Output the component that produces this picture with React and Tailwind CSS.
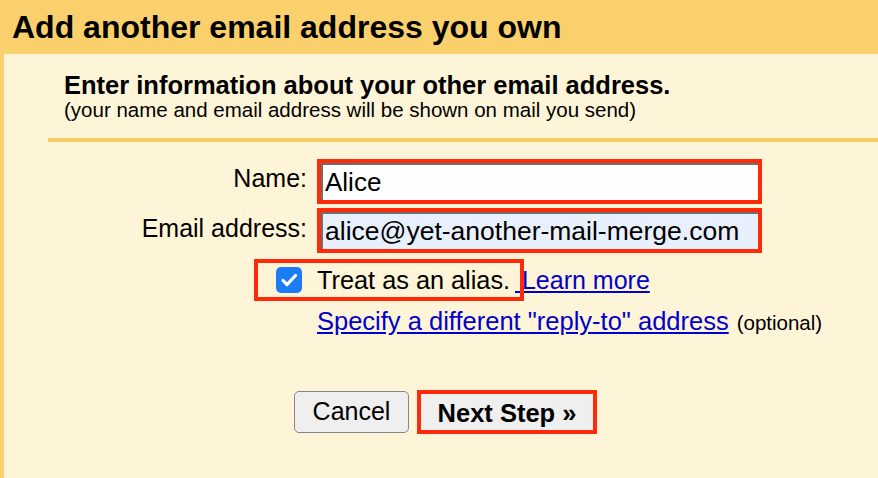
import React from 'react';

const CheckIcon = () => (
  <svg viewBox="0 0 26 26" className="w-[26px] h-[26px]">
    <path d="M7 13.5l4 4.2L19.5 8.5" fill="none" stroke="#fff" strokeWidth="3.2" strokeLinecap="round" strokeLinejoin="round" />
  </svg>
);

const App = () => {
  return (
    <div className="w-[878px] h-[478px] flex flex-col bg-[#fef5d8] text-black font-['Liberation_Sans',Arial,sans-serif] overflow-hidden">
      {/* Title bar */}
      <div className="h-[54px] shrink-0 bg-[#fad06c] pl-[12px] pt-[9px]">
        <h1 className="text-[32px] leading-[36px] font-bold">Add another email address you own</h1>
      </div>

      {/* Body */}
      <div className="flex-1 border-l-4 border-[#fad06c]">
        <div className="pl-[60px] pt-[18px]">
          <h2 className="text-[25.5px] leading-[26px] font-bold">Enter information about your other email address.</h2>
          <p className="text-[20.5px] leading-[24px]">(your name and email address will be shown on mail you send)</p>
        </div>

        <div className="ml-[44px] mt-[16px] h-[4px] bg-[#f9cd66]" />

        {/* Form */}
        <div className="grid grid-cols-[303px_445px] gap-x-[10px] mt-[17px]">
          <label className="text-right text-[25px] leading-[30px] pt-[4px]">Name:</label>
          <div className="h-[45px] border-4 border-[#ff2a0a] bg-white flex">
            <input
              readOnly
              value="Alice"
              className="w-full h-full border-t-2 border-l-2 border-[#6e6e6e] bg-white pl-[2px] text-[26px] outline-none"
            />
          </div>

          <label className="text-right text-[25px] leading-[30px] pt-[5px] mt-[4px]">Email address:</label>
          <div className="h-[45px] mt-[4px] border-4 border-[#ff2a0a] bg-[#e8f0fe] flex">
            <input
              readOnly
              value="alice@yet-another-mail-merge.com"
              className="w-full h-full border-t-2 border-l-2 border-[#6e6e6e] bg-[#e8f0fe] pl-[2px] text-[26.5px] outline-none"
            />
          </div>

          <div />
          <div className="mt-[6px]">
            <div className="flex items-center ml-[-63px] whitespace-nowrap">
              <div className="relative z-10 h-[42px] w-[270px] border-4 border-[#ff2a0a] flex items-center pl-[18px]">
                <span className="w-[26px] h-[26px] rounded-[5px] bg-[#1d7cf5] flex items-center justify-center">
                  <CheckIcon />
                </span>
                <span className="ml-[15px] text-[25.3px] leading-[30px]">Treat as an alias.</span>
              </div>
              <a href="#" className="ml-[-9px] text-[25px] leading-[30px] text-[#0000cc] underline">{'\u00a0'}Learn more</a>
            </div>
            <div className="mt-[5px] whitespace-nowrap">
              <a href="#" className="text-[25.5px] leading-[30px] text-[#0000cc] underline">Specify a different "reply-to" address</a>
              <span className="ml-[8px] text-[20.5px]">(optional)</span>
            </div>
          </div>
        </div>

        {/* Buttons */}
        <div className="flex items-center pl-[290px] mt-[51px]">
          <button className="w-[115px] h-[42px] rounded-[5px] border border-[#858585] bg-[#efefef] text-[25px]">Cancel</button>
          <button className="ml-[8px] w-[180px] h-[44px] border-4 border-[#ff2a0a] bg-[#efefef] text-[25.5px] font-bold">Next Step »</button>
        </div>
      </div>
    </div>
  );
};

export default App;
